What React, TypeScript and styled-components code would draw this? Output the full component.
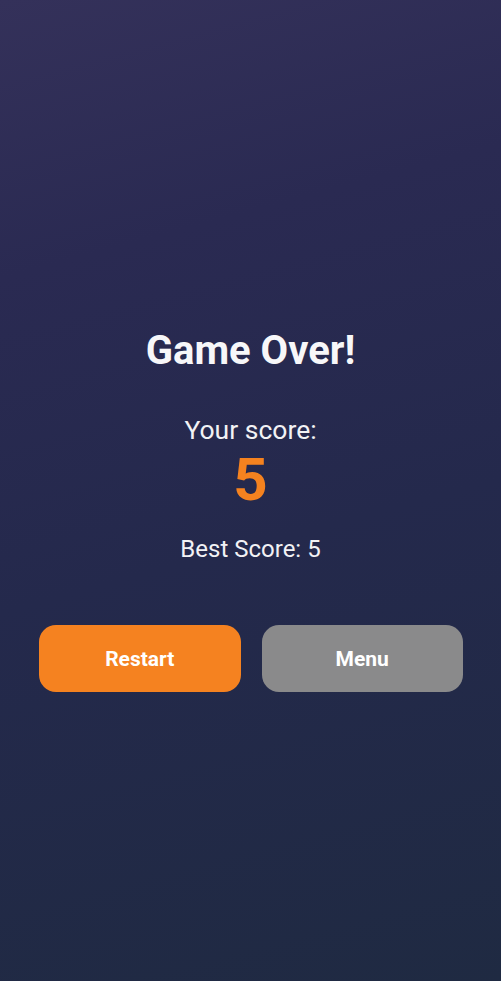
import React from "react";
import styled, { createGlobalStyle } from "styled-components";

const Global = createGlobalStyle`
  html, body { margin: 0; padding: 0; height: 100%; }
  body { font-family: Roboto, "Liberation Sans", sans-serif; }
  #root { height: 100%; }
`;

const Screen = styled.div`
  width: 501px;
  height: 981px;
  box-sizing: border-box;
  background: linear-gradient(165deg, #34315a 0%, #2a2a52 25%, #24294c 55%, #1f2a42 100%);
  display: flex;
  flex-direction: column;
  align-items: center;
  padding-top: 327px;
`;

const Title = styled.h1`
  margin: 0;
  font-size: 40px;
  line-height: 48px;
  font-weight: 700;
  color: #f7f7f9;
`;

const Label = styled.div`
  margin-top: 39px;
  font-size: 26.5px;
  line-height: 31px;
  color: #f2f2f5;
`;

const Score = styled.div`
  margin-top: 0;
  font-size: 60px;
  line-height: 70px;
  font-weight: 700;
  color: #f5821f;
`;

const Best = styled.div`
  margin-top: 20px;
  font-size: 24px;
  line-height: 28px;
  color: #f2f2f5;
`;

const Buttons = styled.div`
  margin-top: 62px;
  width: 100%;
  box-sizing: border-box;
  padding: 0 38px 0 39px;
  display: flex;
  gap: 21px;
`;

const Button = styled.button<{ $variant: "primary" | "secondary" }>`
  flex: 1;
  height: 67px;
  border: none;
  border-radius: 17px;
  background: ${(p) => (p.$variant === "primary" ? "#f58220" : "#8a8a8b")};
  color: #ffffff;
  font-family: Roboto, "Liberation Sans", sans-serif;
  font-size: 21px;
  font-weight: 700;
  cursor: pointer;
`;

export default function App() {
  return (
    <>
      <Global />
      <Screen>
        <Title>Game Over!</Title>
        <Label>Your score:</Label>
        <Score>5</Score>
        <Best>Best Score: 5</Best>
        <Buttons>
          <Button $variant="primary">Restart</Button>
          <Button $variant="secondary">Menu</Button>
        </Buttons>
      </Screen>
    </>
  );
}
